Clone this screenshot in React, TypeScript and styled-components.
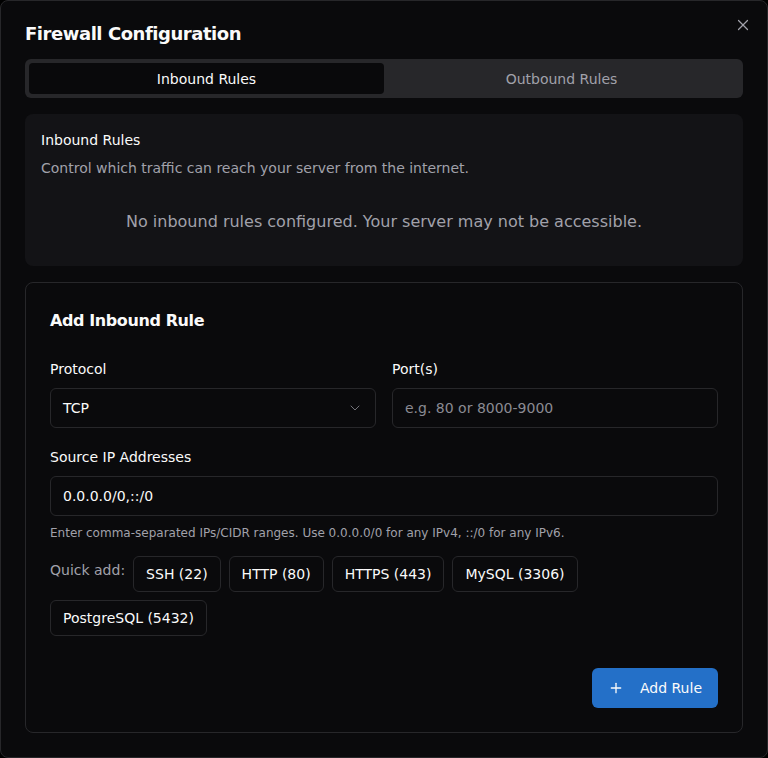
import React from "react";
import styled, { createGlobalStyle } from "styled-components";
import { X, ChevronDown, Plus } from "lucide-react";

const Global = createGlobalStyle`
  html, body { margin: 0; padding: 0; background: #000; }
  body { font-family: "DejaVu Sans", "Noto Sans", sans-serif; color: #fafafa; }
  * { box-sizing: border-box; }
`;

const Dialog = styled.div`
  position: relative;
  width: 768px;
  height: 758px;
  background: #0a0a0c;
  border: 1px solid #27272a;
  border-radius: 8px;
  padding: 24px;
  display: flex;
  flex-direction: column;
`;

const Title = styled.h2`
  margin: 0 0 16px;
  font-size: 18px;
  font-weight: 700;
  letter-spacing: -0.025em;
  line-height: 18px;
  height: 18px;
  color: #fafafa;
`;

const CloseButton = styled.button`
  position: absolute;
  top: 15px;
  right: 15px;
  width: 18px;
  height: 18px;
  padding: 0;
  border: none;
  background: transparent;
  color: #a1a1aa;
  display: flex;
  align-items: center;
  justify-content: center;
`;

const TabList = styled.div`
  display: grid;
  grid-template-columns: 1fr 1fr;
  height: 40px;
  padding: 4px;
  background: #27272a;
  border-radius: 6px;
  margin-bottom: 16px;
`;

const Tab = styled.div<{ $active?: boolean }>`
  display: flex;
  align-items: center;
  justify-content: center;
  border-radius: 4px;
  font-size: 14px;
  background: ${(p) => (p.$active ? "#09090b" : "transparent")};
  color: ${(p) => (p.$active ? "#fafafa" : "#a1a1aa")};
`;

const InfoCard = styled.div`
  background: #131316;
  border-radius: 8px;
  padding: 16px;
  margin-bottom: 16px;
`;

const CardTitle = styled.div`
  font-size: 14px;
  line-height: 20px;
  color: #fafafa;
`;

const CardDesc = styled.div`
  margin-top: 8px;
  font-size: 14px;
  line-height: 20px;
  color: #a1a1aa;
`;

const Empty = styled.div`
  padding: 32px 0 16px;
  text-align: center;
  font-size: 16px;
  line-height: 24px;
  color: #a1a1aa;
`;

const FormCard = styled.div`
  border: 1px solid #27272a;
  border-radius: 8px;
  padding: 24px;
  display: flex;
  flex-direction: column;
`;

const FormTitle = styled.h3`
  margin: 0 0 24px;
  font-size: 16px;
  font-weight: 700;
  letter-spacing: -0.025em;
  line-height: 28px;
`;

const Row = styled.div`
  display: grid;
  grid-template-columns: 1fr 1fr;
  gap: 16px;
  margin-bottom: 19px;
`;

const Field = styled.div`
  display: flex;
  flex-direction: column;
`;

const Label = styled.label`
  font-size: 14px;
  line-height: 20px;
  margin-bottom: 9px;
  color: #fafafa;
`;

const Box = styled.div<{ $placeholder?: boolean }>`
  height: 40px;
  border: 1px solid #27272a;
  border-radius: 6px;
  padding: 0 12px;
  display: flex;
  align-items: center;
  justify-content: space-between;
  font-size: 14px;
  color: ${(p) => (p.$placeholder ? "#8b8b93" : "#fafafa")};
`;

const Help = styled.div`
  margin-top: 9px;
  font-size: 12px;
  line-height: 16px;
  color: #a1a1aa;
`;

const Quick = styled.div`
  margin-top: 15px;
  display: flex;
  flex-wrap: wrap;
  gap: 8px;
`;

const QuickLabel = styled.span`
  font-size: 14px;
  line-height: 20px;
  padding-top: 4px;
  color: #a1a1aa;
`;

const Chip = styled.button`
  height: 36px;
  padding: 0 12px;
  border: 1px solid #27272a;
  border-radius: 6px;
  background: #0a0a0c;
  color: #fafafa;
  font-family: inherit;
  font-size: 14px;
`;

const Footer = styled.div`
  margin-top: 32px;
  display: flex;
  justify-content: flex-end;
`;

const Primary = styled.button`
  height: 40px;
  padding: 0 16px;
  border: none;
  border-radius: 6px;
  background: #2470c8;
  color: #fafafa;
  font-family: inherit;
  font-size: 14px;
  display: flex;
  align-items: center;
  gap: 16px;
`;

const chips = ["SSH (22)", "HTTP (80)", "HTTPS (443)", "MySQL (3306)", "PostgreSQL (5432)"];

export default function App() {
  return (
    <>
      <Global />
      <Dialog>
        <CloseButton aria-label="Close">
          <X size={18} strokeWidth={1.6} />
        </CloseButton>
        <Title>Firewall Configuration</Title>
        <TabList>
          <Tab $active>Inbound Rules</Tab>
          <Tab>Outbound Rules</Tab>
        </TabList>
        <InfoCard>
          <CardTitle>Inbound Rules</CardTitle>
          <CardDesc>Control which traffic can reach your server from the internet.</CardDesc>
          <Empty>No inbound rules configured. Your server may not be accessible.</Empty>
        </InfoCard>
        <FormCard>
          <FormTitle>Add Inbound Rule</FormTitle>
          <Row>
            <Field>
              <Label>Protocol</Label>
              <Box>
                TCP
                <ChevronDown size={16} color="#a1a1aa" strokeWidth={1.5} style={{ opacity: 0.7 }} />
              </Box>
            </Field>
            <Field>
              <Label>Port(s)</Label>
              <Box $placeholder>e.g. 80 or 8000-9000</Box>
            </Field>
          </Row>
          <Field>
            <Label>Source IP Addresses</Label>
            <Box>0.0.0.0/0,::/0</Box>
          </Field>
          <Help>Enter comma-separated IPs/CIDR ranges. Use 0.0.0.0/0 for any IPv4, ::/0 for any IPv6.</Help>
          <Quick>
            <QuickLabel>Quick add:</QuickLabel>
            {chips.map((c) => (
              <Chip key={c}>{c}</Chip>
            ))}
          </Quick>
          <Footer>
            <Primary>
              <Plus size={16} strokeWidth={2} />
              Add Rule
            </Primary>
          </Footer>
        </FormCard>
      </Dialog>
    </>
  );
}
